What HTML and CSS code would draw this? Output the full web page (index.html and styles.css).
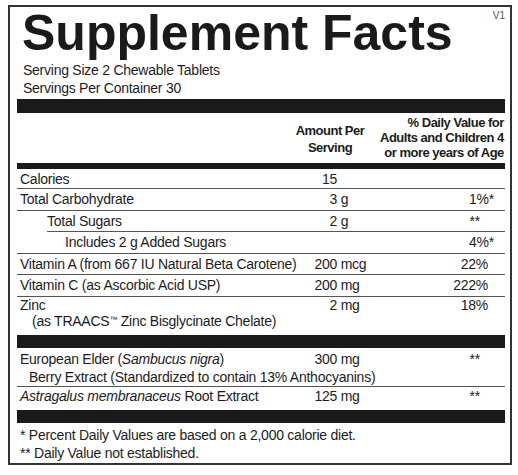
FILE: index.html
```html
<!DOCTYPE html>
<html lang="en">
<head>
<meta charset="utf-8">
<title>Supplement Facts</title>
<link rel="stylesheet" href="styles.css">
</head>
<body>
<div class="label">
  <div class="top">
    <h1 class="title">Supplement Facts</h1>
    <span class="version">V1</span>
  </div>
  <div class="serving">
    <div>Serving Size 2 Chewable Tablets</div>
    <div>Servings Per Container 30</div>
  </div>
  <div class="bar thick"></div>
  <div class="head">
    <div></div>
    <div class="head-amt">Amount Per<br>Serving</div>
    <div class="head-dv">% Daily Value for<br>Adults and Children 4<br>or more years of Age</div>
  </div>
  <div class="bar thin"></div>

  <div class="row first">
    <div class="name">Calories</div>
    <div class="amt"><span class="num">15</span></div>
    <div class="dv"></div>
  </div>
  <div class="row">
    <div class="name">Total Carbohydrate</div>
    <div class="amt"><span class="num">3</span> g</div>
    <div class="dv">1%<span class="ast">*</span></div>
  </div>
  <div class="row sub">
    <div class="name ind1">Total Sugars</div>
    <div class="amt"><span class="num">2</span> g</div>
    <div class="dv"><span class="nodv">**</span></div>
  </div>
  <div class="row">
    <div class="name ind2">Includes 2 g Added Sugars</div>
    <div class="amt"></div>
    <div class="dv">4%<span class="ast">*</span></div>
  </div>
  <div class="row">
    <div class="name">Vitamin A (from 667 IU Natural Beta Carotene)</div>
    <div class="amt"><span class="num">200</span> mcg</div>
    <div class="dv">22%</div>
  </div>
  <div class="row">
    <div class="name">Vitamin C (as Ascorbic Acid USP)</div>
    <div class="amt"><span class="num">200</span> mg</div>
    <div class="dv">222%</div>
  </div>
  <div class="row zinc">
    <div class="name">Zinc<br><span class="cont">(as TRAACS<span class="tm">™</span> Zinc Bisglycinate Chelate)</span></div>
    <div class="amt"><span class="num">2</span> mg</div>
    <div class="dv">18%</div>
  </div>
  <div class="bar mid"></div>

  <div class="row elder">
    <div class="name">European Elder (<i>Sambucus nigra</i>)</div>
    <div class="amt"><span class="num">300</span> mg</div>
    <div class="dv"><span class="nodv">**</span></div>
    <div class="span cont">Berry Extract (Standardized to contain 13% Anthocyanins)</div>
  </div>
  <div class="row astra">
    <div class="name"><i>Astragalus membranaceus</i> Root Extract</div>
    <div class="amt"><span class="num">125</span> mg</div>
    <div class="dv"><span class="nodv">**</span></div>
  </div>
  <div class="bar mid"></div>

  <div class="foot">
    <div>* Percent Daily Values are based on a 2,000 calorie diet.</div>
    <div>** Daily Value not established.</div>
  </div>
</div>
</body>
</html>
```

FILE: styles.css
```css
* { box-sizing: border-box; }

body {
  margin: 0;
  background: #fff;
  font-family: "Liberation Sans", Arial, sans-serif;
  color: #1c1c1c;
}

.label {
  margin: 5px 0 0 8px;
  width: 504px;
  border: 2px solid #333;
  padding: 1px 5px 0 7px;
  font-size: 14px;
  letter-spacing: -0.25px;
}

.top {
  display: flex;
  align-items: flex-start;
}

.title {
  margin: 0 0 0 5px;
  font-size: 50px;
  line-height: 50px;
  font-weight: bold;
  letter-spacing: 0;
  color: #1a1a1a;
}

.version {
  margin-left: auto;
  margin-top: 2px;
  font-size: 10px;
  line-height: 12px;
  letter-spacing: 0;
  color: #555;
}

.serving {
  margin-top: 3px;
  padding-left: 6px;
  line-height: 18px;
}

.bar { background: #1a1a1a; }
.bar.thick { margin-top: 2px; height: 14px; }
.bar.thin { height: 6px; }
.bar.mid { height: 13px; }

.head {
  display: grid;
  grid-template-columns: 263px 100px 1fr;
  align-items: end;
  padding: 2px 0 3px;
  font-size: 13px;
  font-weight: bold;
  letter-spacing: -0.5px;
  white-space: nowrap;
}

.head-amt {
  text-align: center;
  line-height: 17px;
  margin-bottom: 4px;
}

.head-dv {
  text-align: right;
  line-height: 15px;
  padding-right: 2px;
}

.row {
  display: grid;
  grid-template-columns: 280px 110px 1fr;
  padding: 1px 0 1.5px;
  line-height: 18px;
  border-bottom: 1px solid #555;
  white-space: nowrap;
}

.row.first { padding: 0.5px 0; }

.row.sub {
  border-bottom: 0;
  padding-bottom: 2.5px;
  background: linear-gradient(#555, #555) no-repeat 30px 100% / calc(100% - 30px) 1px;
}

.row.zinc {
  border-bottom: 0;
  padding: 0 0 6.5px;
  line-height: 16px;
}

.row.elder { padding: 2px 0 0; }

.row.astra {
  border-bottom: 0;
  padding: 0 0 5px;
}

.name { padding-left: 3px; }
.name.ind1 { padding-left: 30px; }
.name.ind2 { padding-left: 48px; }

.cont { padding-left: 12px; }
.span { grid-column: 1 / -1; }

.tm {
  font-size: 8px;
  vertical-align: 4px;
  line-height: 0;
}

.num {
  display: inline-block;
  width: 40px;
  text-align: right;
}

.dv {
  text-align: right;
  padding-right: 17px;
}

.ast { margin-right: -6px; }
.nodv { margin-right: 8px; }

.foot {
  padding: 3px 0 1px 3px;
  line-height: 18px;
}
```
